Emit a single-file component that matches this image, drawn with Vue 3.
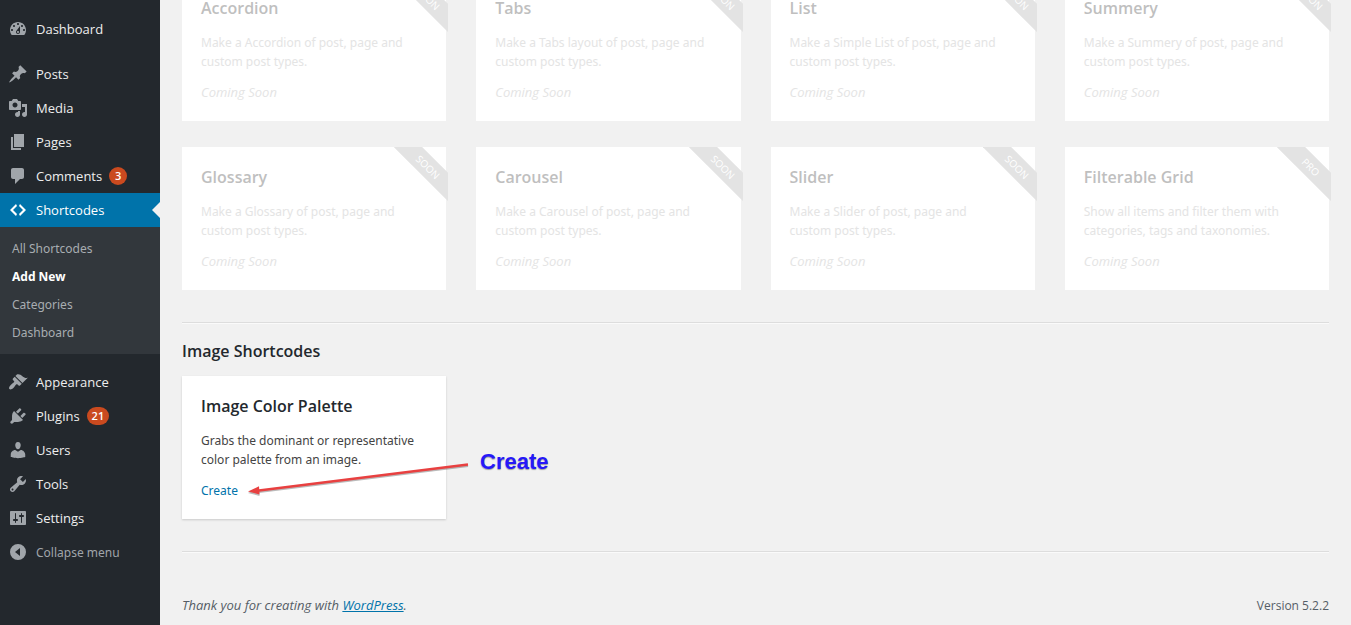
<script setup>
const paths = {
  dashboard: 'M3.76 16h12.48c1.1-1.37 1.76-3.11 1.76-5 0-4.42-3.58-8-8-8s-8 3.58-8 8c0 1.89.66 3.63 1.76 5zM10 4c.55 0 1 .45 1 1s-.45 1-1 1-1-.45-1-1 .45-1 1-1zM6 6c.55 0 1 .45 1 1s-.45 1-1 1-1-.45-1-1 .45-1 1-1zm8 0c.55 0 1 .45 1 1s-.45 1-1 1-1-.45-1-1 .45-1 1-1zm-5.37 5.55L12 7v6c0 1.1-.9 2-2 2s-2-.9-2-2c0-.57.24-1.08.63-1.45zM4 10c.55 0 1 .45 1 1s-.45 1-1 1-1-.45-1-1 .45-1 1-1zm12 0c.55 0 1 .45 1 1s-.45 1-1 1-1-.45-1-1 .45-1 1-1zm-5 3c0-.55-.45-1-1-1s-1 .45-1 1 .45 1 1 1 1-.45 1-1z',
  posts: 'M10.44 3.02l1.82-1.82 6.36 6.35-1.83 1.82c-1.05-.68-2.48-.57-3.41.36l-.75.75c-.92.93-1.04 2.35-.35 3.41l-1.83 1.82-2.41-2.41-2.8 2.79c-.42.42-3.38 2.71-3.8 2.29s1.86-3.39 2.28-3.81l2.79-2.79L4.1 9.36l1.83-1.82c1.05.69 2.48.57 3.4-.36l.75-.75c.93-.92 1.05-2.35.36-3.41z',
  media: 'M13 11V4c0-.55-.45-1-1-1h-1.67L9 1H5L3.67 3H2c-.55 0-1 .45-1 1v7c0 .55.45 1 1 1h10c.55 0 1-.45 1-1zM7 4.5c1.38 0 2.5 1.12 2.5 2.5S8.38 9.5 7 9.5 4.5 8.38 4.5 7 5.62 4.5 7 4.5zM14 6h5v10.5c0 1.38-1.12 2.5-2.5 2.5S14 17.88 14 16.5s1.12-2.5 2.5-2.5c.17 0 .34.02.5.05V9h-3V6zm-4 8.05V13h2v3.5c0 1.38-1.12 2.5-2.5 2.5S7 17.88 7 16.5 8.12 14 9.5 14c.17 0 .34.02.5.05z',
  pages: 'M6 15V2h10v13H6zm-1 1h8v2H3V5h2v11z',
  comments: 'M5 2h9c1.1 0 2 .9 2 2v7c0 1.1-.9 2-2 2h-2l-5 5v-5H5c-1.1 0-2-.9-2-2V4c0-1.1.9-2 2-2z',
  code: 'M9 6l-4 4 4 4-1 2-6-6 6-6zm2 8l4-4-4-4 1-2 6 6-6 6z',
  appearance: 'M14.48 11.06L7.41 3.99l1.5-1.5c.5-.56 2.3-.47 3.51.32 1.21.8 1.43 1.28 2.91 2.1 1.18.64 2.45 1.26 4.45.85zm-.71.71L6.7 4.7 4.93 6.47c-.39.39-.39 1.02 0 1.41l1.06 1.06c.39.39.39 1.03 0 1.42-.6.6-1.43 1.11-2.21 1.69-.35.26-.7.53-1.01.84C1.43 14.23.4 16.08 1.4 17.07c.99 1 2.84-.03 4.18-1.36.31-.31.58-.66.85-1.02.57-.78 1.08-1.61 1.69-2.21.39-.39 1.02-.39 1.41 0l1.06 1.06c.39.39 1.02.39 1.41 0z',
  plugins: 'M13.11 4.36L9.87 7.6 8 5.73l3.24-3.24c.35-.34 1.05-.2 1.56.32.52.51.66 1.21.31 1.55zm-8 1.77l.91-1.12 9.01 9.01-1.19.84c-.71.71-2.63 1.16-3.82 1.16H6.14L4.9 17.26c-.59.59-1.54.59-2.12 0-.59-.58-.59-1.53 0-2.12l1.24-1.24v-3.88c0-1.13.4-3.19 1.09-3.89zm7.26 3.97l3.24-3.24c.34-.35 1.04-.21 1.55.31.52.51.66 1.21.31 1.55l-3.24 3.25z',
  users: 'M10 9.25c-2.27 0-2.73-3.44-2.73-3.44C7 4.02 7.82 2 9.97 2c2.16 0 2.98 2.02 2.71 3.81 0 0-.41 3.44-2.68 3.44zm0 2.57L12.72 10c2.39 0 4.52 2.33 4.52 4.53v2.49s-3.65 1.13-7.24 1.13c-3.65 0-7.24-1.13-7.24-1.13v-2.49c0-2.25 1.94-4.48 4.47-4.48z',
  tools: 'M16.68 9.77c-1.34 1.34-3.3 1.67-4.95.99l-5.41 6.52c-.99.99-2.59.99-3.58 0s-.99-2.59 0-3.57l6.52-5.42c-.68-1.65-.35-3.61.99-4.95 1.28-1.28 3.12-1.62 4.72-1.06l-2.89 2.89 2.82 2.82 2.86-2.87c.53 1.58.18 3.39-1.08 4.65zM3.81 16.21c.4.39 1.04.39 1.43 0 .4-.4.4-1.04 0-1.43-.39-.4-1.03-.4-1.43 0-.39.39-.39 1.03 0 1.43z',
  settings: 'M18 16V4c0-.55-.45-1-1-1H3c-.55 0-1 .45-1 1v12c0 .55.45 1 1 1h14c.55 0 1-.45 1-1zM8 11h1c.55 0 1 .45 1 1s-.45 1-1 1H8v1.5c0 .28-.22.5-.5.5s-.5-.22-.5-.5V13H6c-.55 0-1-.45-1-1s.45-1 1-1h1V5.5c0-.28.22-.5.5-.5s.5.22.5.5V11zm5-2h-1c-.55 0-1-.45-1-1s.45-1 1-1h1V5.5c0-.28.22-.5.5-.5s.5.22.5.5V7h1c.55 0 1 .45 1 1s-.45 1-1 1h-1v5.5c0 .28-.22.5-.5.5s-.5-.22-.5-.5V9z',
  collapse: 'M10 2a8 8 0 1 1 0 16a8 8 0 1 1 0-16zM12 6L7 10l5 4z'
}

const groups = [
  [{ label: 'Dashboard', icon: 'dashboard' }],
  [
    { label: 'Posts', icon: 'posts' },
    { label: 'Media', icon: 'media' },
    { label: 'Pages', icon: 'pages' },
    { label: 'Comments', icon: 'comments', count: 3 },
    {
      label: 'Shortcodes',
      icon: 'code',
      active: true,
      children: ['All Shortcodes', 'Add New', 'Categories', 'Dashboard']
    }
  ],
  [
    { label: 'Appearance', icon: 'appearance' },
    { label: 'Plugins', icon: 'plugins', count: 21 },
    { label: 'Users', icon: 'users' },
    { label: 'Tools', icon: 'tools' },
    { label: 'Settings', icon: 'settings' }
  ]
]

const upcoming = [
  { title: 'Accordion', text: 'Make a Accordion of post, page and custom post types.', tag: 'SOON' },
  { title: 'Tabs', text: 'Make a Tabs layout of post, page and custom post types.', tag: 'SOON' },
  { title: 'List', text: 'Make a Simple List of post, page and custom post types.', tag: 'SOON' },
  { title: 'Summery', text: 'Make a Summery of post, page and custom post types.', tag: 'SOON' },
  { title: 'Glossary', text: 'Make a Glossary of post, page and custom post types.', tag: 'SOON' },
  { title: 'Carousel', text: 'Make a Carousel of post, page and custom post types.', tag: 'SOON' },
  { title: 'Slider', text: 'Make a Slider of post, page and custom post types.', tag: 'SOON' },
  { title: 'Filterable Grid', text: 'Show all items and filter them with categories, tags and taxonomies.', tag: 'PRO' }
]
</script>

<template>
  <div class="admin">
    <nav class="sidebar" aria-label="Main menu">
      <ul v-for="(group, g) in groups" :key="g" class="menu">
        <li v-for="item in group" :key="item.label">
          <a href="#" class="menu-link" :class="{ active: item.active }">
            <svg class="icon" viewBox="0 0 20 20" aria-hidden="true"><path :d="paths[item.icon]" fill-rule="evenodd" /></svg>
            <span>{{ item.label }}</span>
            <span v-if="item.count" class="count">{{ item.count }}</span>
          </a>
          <ul v-if="item.children" class="submenu">
            <li v-for="child in item.children" :key="child">
              <a href="#" class="sub-link" :class="{ current: child === 'Add New' }">{{ child }}</a>
            </li>
          </ul>
        </li>
      </ul>
      <button type="button" class="menu-link collapse">
        <svg class="icon" viewBox="0 0 20 20" aria-hidden="true"><path :d="paths.collapse" fill-rule="evenodd" /></svg>
        <span>Collapse menu</span>
      </button>
    </nav>

    <div class="content">
      <main>
        <section class="grid upcoming">
          <article v-for="card in upcoming" :key="card.title" class="card disabled">
            <h3>{{ card.title }}</h3>
            <p>{{ card.text }}</p>
            <p class="soon">Coming Soon</p>
            <div class="ribbon"><span>{{ card.tag }}</span></div>
          </article>
        </section>
        <hr />
        <h2>Image Shortcodes</h2>
        <section class="grid">
          <article class="card raised">
            <h3>Image Color Palette</h3>
            <p>Grabs the dominant or representative color palette from an image.</p>
            <p><a href="#">Create</a></p>
            <svg class="arrow" viewBox="0 0 224 36" aria-hidden="true">
              <g class="arrow-shadow" transform="translate(0 1.5)">
                <path d="M221 3.5L10 29.7" />
                <path class="head" d="M1 30.5L12 25.3L12.5 33.5z" />
              </g>
              <g class="arrow-line">
                <path d="M221 3.5L10 29.7" />
                <path class="head" d="M1 30.5L12 25.3L12.5 33.5z" />
              </g>
            </svg>
            <strong class="callout">Create</strong>
          </article>
        </section>
        <hr />
      </main>
      <footer>
        <p class="thanks">Thank you for creating with <a href="#">WordPress</a>.</p>
        <p class="version">Version 5.2.2</p>
      </footer>
    </div>
  </div>
</template>

<style>
body {
  margin: 0;
  background: #f1f1f1;
}
</style>

<style scoped>
.admin {
  display: flex;
  min-height: 100vh;
  overflow: hidden;
  background: #f1f1f1;
  color: #444;
  font: 12px/19px "Noto Sans", "Open Sans", sans-serif;
}

ul {
  margin: 0;
  padding: 0;
  list-style: none;
}

h2, h3, p {
  margin: 0;
}

a {
  color: #0073aa;
}

/* Sidebar */
.sidebar {
  flex: none;
  box-sizing: border-box;
  width: 160px;
  padding-top: 12px;
  background: #23282d;
}

.menu + .menu {
  margin-top: 11px;
}

.menu-link {
  position: relative;
  display: flex;
  align-items: center;
  gap: 8px;
  box-sizing: border-box;
  width: 100%;
  height: 34px;
  padding: 0 8px;
  color: #eee;
  font-family: "Open Sans", "Noto Sans", sans-serif;
  font-size: 13px;
  text-decoration: none;
}

.icon {
  flex: none;
  width: 20px;
  height: 20px;
  fill: #a0a5aa;
}

.count {
  min-width: 18px;
  box-sizing: border-box;
  margin-left: -1px;
  padding: 0 5px;
  border-radius: 9px;
  background: #ca4a1f;
  color: #fff;
  font-size: 11px;
  font-weight: 600;
  line-height: 18px;
  text-align: center;
}

.active {
  background: #0073aa;
  color: #fff;
}

.active .icon {
  fill: #fff;
}

.active::after {
  content: "";
  position: absolute;
  top: 9px;
  right: 0;
  border: 8px solid transparent;
  border-left-width: 0;
  border-right-color: #f1f1f1;
}

.submenu {
  padding: 8px 0 7px;
  background: #32373c;
}

.sub-link {
  display: block;
  padding: 0 12px;
  color: #a8adb1;
  line-height: 28px;
  text-decoration: none;
}

.current {
  color: #fff;
  font-weight: 700;
}

.collapse {
  border: 0;
  background: none;
  color: #a0a5aa;
  font-family: inherit;
  font-size: 12px;
  text-align: left;
}

/* Content */
.content {
  flex: 1;
  min-width: 0;
  padding: 0 22px;
}

.grid {
  display: grid;
  grid-template-columns: repeat(4, minmax(0, 1fr));
  gap: 26px 30px;
}

.upcoming {
  margin-top: -22px;
}

.card {
  position: relative;
  padding: 19px 24px 19px 19px;
  background: #fff;
}

.raised {
  box-shadow: 0 1px 2px rgba(0, 0, 0, 0.16);
}

h2, h3 {
  color: #23282d;
  font-family: "Open Sans", "Noto Sans", sans-serif;
  font-size: 16px;
  font-weight: 600;
  line-height: 22px;
}

h3 {
  margin-bottom: 14px;
}

.card p + p {
  margin-top: 12px;
}

.card a {
  text-decoration: none;
}

.disabled h3 {
  color: #bfbfbf;
}

.disabled p {
  color: #e4e4e4;
}

.soon,
.thanks {
  font-family: "Open Sans", "Noto Sans", sans-serif;
  font-size: 13px;
  font-style: italic;
}

.ribbon {
  position: absolute;
  top: 0;
  right: -2px;
  width: 54px;
  height: 54px;
  overflow: hidden;
}

.ribbon span {
  position: absolute;
  top: 10px;
  left: -16px;
  width: 100px;
  background: #e3e3e3;
  color: #fff;
  font-family: "Open Sans", "Noto Sans", sans-serif;
  font-size: 10px;
  line-height: 20px;
  text-align: center;
  transform: rotate(45deg);
}

hr {
  margin: 32px 0 0;
  border: 0;
  border-top: 1px solid #ddd;
  border-bottom: 1px solid #fafafa;
}

h2 {
  margin: 16px 0 14px;
}

/* Annotation over the card */
.arrow {
  position: absolute;
  top: 85px;
  left: 65px;
  width: 224px;
  height: 36px;
  overflow: visible;
}

.arrow path {
  fill: none;
  stroke-width: 2.6;
}

.arrow-line path {
  stroke: #e84040;
}

.arrow-line .head {
  fill: #e84040;
  stroke: none;
}

.arrow-shadow {
  opacity: 0.4;
}

.arrow-shadow path {
  stroke: #555;
  stroke-width: 2;
}

.arrow-shadow .head {
  fill: #555;
  stroke: none;
}

.callout {
  position: absolute;
  top: 73px;
  left: 298px;
  color: #2618f8;
  font: bold 22px/26px "Liberation Sans", Arial, sans-serif;
  text-shadow: 0 1px 1px rgba(0, 0, 0, 0.35);
}

footer {
  display: flex;
  justify-content: space-between;
  padding: 43px 0 10px;
  color: #555d66;
}

.version {
  font-family: "Open Sans", "Noto Sans", sans-serif;
}
</style>
